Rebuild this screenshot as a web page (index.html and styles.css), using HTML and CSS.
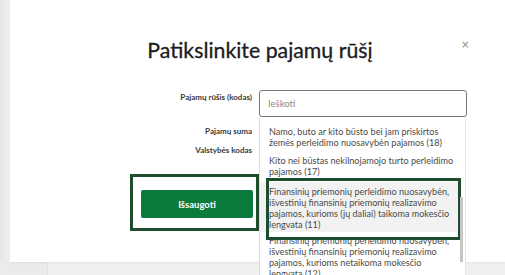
FILE: index.html
```html
<!DOCTYPE html>
<html lang="lt">
<head>
<meta charset="utf-8">
<title>Patikslinkite pajamų rūšį</title>
<link rel="stylesheet" href="styles.css">
</head>
<body>
<div class="page">
  <div class="side"></div>
  <div class="modal">
    <header class="modal-head">
      <h1 class="title">Patikslinkite pajamų rūšį</h1>
      <button class="close" type="button" aria-label="Uždaryti">×</button>
    </header>
    <form class="form">
      <div class="row row-first">
        <label class="label">Pajamų rūšis (kodas)</label>
        <div class="field">
          <input class="input" type="text" placeholder="Ieškoti">
          <div class="dropdown">
            <ul class="options">
              <li class="option">Namo, buto ar kito būsto bei jam priskirtos<br>žemės perleidimo nuosavybėn pajamos (18)</li>
              <li class="option option-second">Kito nei būstas nekilnojamojo turto perleidimo<br>pajamos (17)</li>
              <li class="option option-active">Finansinių priemonių perleidimo nuosavybėn,<br>išvestinių finansinių priemonių realizavimo<br>pajamos, kurioms (jų daliai) taikoma mokesčio<br>lengvata (11)</li>
              <li class="option">Finansinių priemonių perleidimo nuosavybėn,<br>išvestinių finansinių priemonių realizavimo<br>pajamos, kurioms netaikoma mokesčio<br>lengvata (12)</li>
            </ul>
            <div class="mark mark-option"></div>
            <div class="scroll-thumb"></div>
          </div>
        </div>
      </div>
      <div class="row row-small">
        <label class="label">Pajamų suma</label>
        <div class="field"></div>
      </div>
      <div class="row row-small row-third">
        <label class="label">Valstybės kodas</label>
        <div class="field"></div>
      </div>
      <div class="actions">
        <div class="mark-box">
          <button class="save" type="button">Išsaugoti</button>
        </div>
      </div>
    </form>
  </div>
</div>
</body>
</html>
```

FILE: styles.css
```css
* { box-sizing: border-box; }
html, body {
  margin: 0;
  width: 505px;
  height: 275px;
  overflow: hidden;
}
body {
  font-family: Lato, "Open Sans", sans-serif;
  background: linear-gradient(to right, #ebebeb 0, #ebebeb 47px, #e2e2e2 47px, #e2e2e2 48px, #f0f0f0 48px);
  color: #333;
}
.page {
  display: flex;
  height: 262px;
}
.side {
  width: 10px;
  background: linear-gradient(to right, #e6e6e6, #f2f2f2);
}
.modal {
  flex: 1;
  position: relative;
  background: #fff;
  box-shadow: 0 1px 2px rgba(0, 0, 0, 0.06);
}
.modal-head {
  padding-top: 35px;
  text-align: center;
}
.title {
  margin: 0;
  font-size: 21.3px;
  line-height: 30px;
  font-weight: 400;
  color: #1c1c1c;
  padding-left: 5px;
  -webkit-text-stroke: 0.3px #1c1c1c;
}
.close {
  position: absolute;
  top: 38px;
  left: 451px;
  border: 0;
  background: none;
  padding: 0;
  font-family: "DejaVu Sans", sans-serif;
  font-size: 10px;
  line-height: 14px;
  color: #8a8a8a;
}
.form {
  margin-top: 25px;
}
.row {
  display: flex;
  column-gap: 7px;
}
.label {
  width: 242px;
  text-align: right;
  font-size: 8px;
  line-height: 11px;
  font-weight: 700;
  color: #3a3a3a;
}
.row-first .label { padding-top: 2px; }
.row-first { margin-bottom: 9px; }
.row-small { height: 11px; }
.row-third { margin-top: 8px; }
.field {
  width: 208px;
  position: relative;
}
.input {
  display: block;
  width: 208px;
  height: 27px;
  border: 1px solid #777;
  border-radius: 3px;
  padding: 0 8px;
  font-family: inherit;
  font-size: 9.5px;
  color: #333;
  outline: none;
}
.input::placeholder { color: #8a8a8a; }
.dropdown {
  position: absolute;
  top: 27px;
  left: 0;
  width: 207px;
  height: 170px;
  background: #fff;
  border-left: 1px solid #dcdcdc;
  border-right: 1px solid #e4e4e4;
  z-index: 2;
  overflow: hidden;
}
.options {
  list-style: none;
  margin: 0;
  padding: 6px 0 0 0;
}
.option {
  width: 199px;
  padding: 3px 2px 3px 9px;
  margin-bottom: 1px;
  font-size: 9.1px;
  line-height: 11px;
  color: #4a4a4a;
  white-space: nowrap;
}
.option-second { margin-bottom: 2px; }
.option-active {
  background: #f2f2f2;
  padding-top: 4px;
  padding-bottom: 2px;
  margin-bottom: 0;
}
.mark {
  position: absolute;
  border: 3px solid #1d4d2c;
}
.mark-option {
  left: 6px;
  top: 61px;
  width: 195px;
  height: 62px;
}
.scroll-thumb {
  position: absolute;
  left: 200px;
  top: 80px;
  width: 3px;
  height: 65px;
  background: #c6c6c6;
}
.actions {
  margin-top: 18px;
  padding-left: 120px;
}
.mark-box {
  width: 129px;
  height: 57px;
  border: 3px solid #1d4d2c;
  padding: 13px 3px 0 8px;
}
.save {
  display: block;
  width: 112px;
  height: 28px;
  border: 0;
  border-radius: 2px;
  background: #0b7a3d;
  color: #fff;
  font-family: inherit;
  font-size: 9.5px;
  font-weight: 700;
}
```
